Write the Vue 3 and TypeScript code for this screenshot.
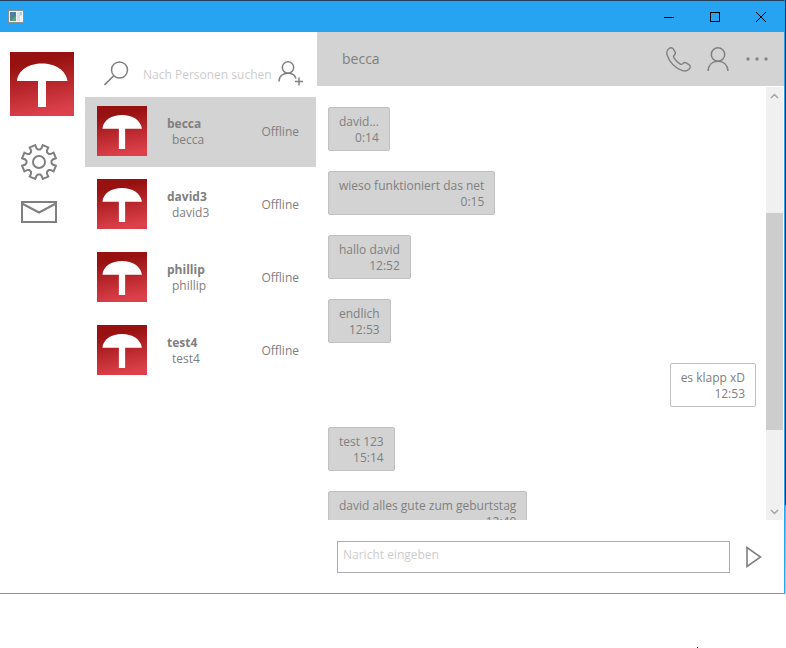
<script setup lang="ts">
import { ref } from 'vue'

interface Contact {
  name: string
  handle: string
  status: string
}

interface Message {
  text: string
  time: string
  own?: boolean
}

const contacts: Contact[] = [
  { name: 'becca', handle: 'becca', status: 'Offline' },
  { name: 'david3', handle: 'david3', status: 'Offline' },
  { name: 'phillip', handle: 'phillip', status: 'Offline' },
  { name: 'test4', handle: 'test4', status: 'Offline' },
]

const messages: Message[] = [
  { text: 'david...', time: '0:14' },
  { text: 'wieso funktioniert das net', time: '0:15' },
  { text: 'hallo david', time: '12:52' },
  { text: 'endlich', time: '12:53' },
  { text: 'es klapp xD', time: '12:53', own: true },
  { text: 'test 123', time: '15:14' },
  { text: 'david alles gute zum geburtstag', time: '12:40' },
]

const selected = ref(0)
const search = ref('')
const draft = ref('')

// Outline of an eight-toothed cog centred on (18, 18).
function cogPath(): string {
  const point = (radius: number, degrees: number): string => {
    const a = (degrees * Math.PI) / 180
    return `${(18 + radius * Math.cos(a)).toFixed(2)} ${(18 + radius * Math.sin(a)).toFixed(2)}`
  }
  const points: string[] = []
  for (let i = 0; i < 8; i++) {
    const c = 22.5 + i * 45
    points.push(point(12.6, c - 17), point(14, c - 12), point(17.3, c - 10))
    points.push(point(17.3, c + 10), point(14, c + 12), point(12.6, c + 17))
  }
  return `M${points.join('L')}Z`
}

const cog = cogPath()
</script>

<template>
  <div class="desktop">
    <div class="window">
      <header class="titlebar">
        <svg class="app-icon" width="16" height="13" viewBox="0 0 16 13" aria-hidden="true">
          <rect x="0.5" y="0.5" width="15" height="12" fill="#eef3f5" stroke="#8d8f92" />
          <rect x="2" y="2" width="6" height="9" fill="#4b8a86" />
          <path d="M2 2h6v3L2 8z" fill="#4c7fa5" />
          <path d="M2 11l6-5v5z" fill="#5aa56b" />
          <rect x="9" y="2" width="3" height="9" fill="#dcdedf" />
          <path d="M12 2h2v3l-2 1z" fill="#a5d3d6" />
        </svg>
        <div class="window-buttons">
          <button type="button" aria-label="Minimieren">
            <svg width="10" height="10" viewBox="0 0 10 10"><path d="M0 5.5H10" /></svg>
          </button>
          <button type="button" aria-label="Maximieren">
            <svg width="10" height="10" viewBox="0 0 10 10"><rect x="0.5" y="0.5" width="9" height="9" /></svg>
          </button>
          <button type="button" aria-label="Schließen">
            <svg width="10" height="10" viewBox="0 0 10 10"><path d="M0 0L10 10M10 0L0 10" /></svg>
          </button>
        </div>
      </header>

      <div class="body">
        <nav class="rail">
          <svg class="avatar large" viewBox="0 0 64 64" aria-hidden="true">
            <defs>
              <linearGradient id="brand" x1="0.4" y1="0" x2="0.6" y2="1">
                <stop offset="0.15" stop-color="#981111" />
                <stop offset="0.95" stop-color="#dc404a" />
              </linearGradient>
            </defs>
            <rect width="64" height="64" fill="url(#brand)" />
            <path d="M7 29C8 18 19 11.500 32 11.500S56 18 57.500 29H36V55H28V29Z" fill="#fff" />
          </svg>
          <button type="button" aria-label="Einstellungen">
            <svg class="icon" width="36" height="36" viewBox="0 0 36 36">
              <path :d="cog" stroke-width="2" />
              <circle cx="18" cy="18" r="6" stroke-width="2" />
            </svg>
          </button>
          <button type="button" aria-label="Nachrichten">
            <svg class="icon" width="36" height="24" viewBox="0 0 36 24">
              <path d="M1 2H35V22H1ZM1 3.500L18 12.500L35 3.500" stroke-width="2" />
            </svg>
          </button>
        </nav>

        <aside class="contacts">
          <div class="search">
            <label for="person-search" aria-label="Suche">
              <svg class="icon" width="25" height="25" viewBox="0 0 25 25">
                <circle cx="15.500" cy="9" r="8" stroke-width="1.500" />
                <path d="M10 14.500L0.500 24" stroke-width="1.700" />
              </svg>
            </label>
            <input id="person-search" v-model="search" type="text" placeholder="Nach Personen suchen" />
            <button type="button" aria-label="Person hinzufügen">
              <svg class="icon" width="26" height="25" viewBox="0 0 26 25">
                <circle cx="10" cy="6.500" r="5.700" stroke-width="1.500" />
                <path d="M1 20.500C1 15 5 12.200 10 12.200C14 12.200 17 14 18 17.500M17 20.500H25M21 16.500V24.500" stroke-width="1.500" />
              </svg>
            </button>
          </div>
          <ul>
            <li v-for="(contact, index) in contacts" :key="contact.name">
              <button
                type="button"
                class="contact"
                :class="{ active: index === selected }"
                @click="selected = index"
              >
                <svg class="avatar" viewBox="0 0 64 64" aria-hidden="true">
                  <rect width="64" height="64" fill="url(#brand)" />
                  <path d="M7 29C8 18 19 11.500 32 11.500S56 18 57.500 29H36V55H28V29Z" fill="#fff" />
                </svg>
                <span class="who">
                  <strong>{{ contact.name }}</strong>
                  <span class="handle">{{ contact.handle }}</span>
                </span>
                <span class="status">{{ contact.status }}</span>
              </button>
            </li>
          </ul>
        </aside>

        <main class="chat">
          <header class="chat-head">
            <h1>{{ contacts[selected].name }}</h1>
            <button type="button" aria-label="Anrufen">
              <svg class="icon" width="25" height="25" viewBox="0 0 25 25">
                <path
                  d="M3 1.500C4.500 0.300 6.300 0.600 7.200 1.900L9 4.800C9.700 6 9.400 7.200 8.300 8.100C7.300 8.900 7.300 9.800 8 10.900C9.700 13.500 11.500 15.300 13.900 16.900C15 17.600 15.900 17.500 16.700 16.600C17.600 15.500 18.900 15.200 20.100 15.900L23 17.700C24.400 18.600 24.600 20.300 23.500 21.700C21.900 23.900 19.400 24.500 16.500 23.600C9.500 21.300 3.500 15.200 1.200 8.300C0.300 5.400 1 3 3 1.500Z"
                  stroke-width="1.400"
                />
              </svg>
            </button>
            <button type="button" aria-label="Profil">
              <svg class="icon" width="22" height="25" viewBox="0 0 22 25">
                <circle cx="11" cy="7.500" r="6.700" stroke-width="1.500" />
                <path d="M1 24C1.500 18 5.500 14.300 11 14.300S20.500 18 21 24" stroke-width="1.500" />
              </svg>
            </button>
            <button type="button" aria-label="Mehr">
              <svg width="24" height="6" viewBox="0 0 24 6" fill="#858585">
                <circle cx="3" cy="3" r="1.700" />
                <circle cx="12" cy="3" r="1.700" />
                <circle cx="21" cy="3" r="1.700" />
              </svg>
            </button>
          </header>

          <div class="history">
            <ol>
              <li v-for="(message, index) in messages" :key="index" :class="{ own: message.own }">
                <span>{{ message.text }}</span>
                <time>{{ message.time }}</time>
              </li>
            </ol>
            <div class="scrollbar" aria-hidden="true">
              <svg width="17" height="17" viewBox="0 0 17 17"><path d="M5 11L8.500 7.500L12 11" /></svg>
              <div class="track-before"></div>
              <div class="thumb"></div>
              <div class="track-after"></div>
              <svg width="17" height="17" viewBox="0 0 17 17"><path d="M5 7L8.500 10.500L12 7" /></svg>
            </div>
          </div>

          <form class="compose" @submit.prevent>
            <textarea v-model="draft" rows="1" aria-label="Nachricht" placeholder="Naricht eingeben"></textarea>
            <button type="submit" aria-label="Senden">
              <svg class="icon" width="16" height="22" viewBox="0 0 16 22">
                <path d="M1 1.500V20.500L14.500 11Z" stroke-width="1.600" />
              </svg>
            </button>
          </form>
        </main>
      </div>
    </div>
    <div class="edge"></div>
    <div class="speck"></div>
  </div>
</template>

<style>
body {
  margin: 0;
  background: #fff;
}
</style>

<style scoped>
.desktop {
  position: relative;
  display: flex;
  flex-direction: column;
  height: 100vh;
  overflow: hidden;
  font: 12px/16px "Open Sans", "Noto Sans", sans-serif;
  color: #808080;
}

.window {
  display: flex;
  flex-direction: column;
  height: calc(100vh - 54px);
  box-sizing: border-box;
  margin-right: 1px;
  border-top: 1px solid #24405a;
  border-right: 1px solid #26a4f2;
  border-bottom: 1px solid #45a5dc;
}

.edge {
  position: absolute;
  top: 0;
  right: 0;
  width: 1px;
  height: calc(100vh - 54px);
  background: linear-gradient(#1b3047 85%, #9aa5ad 85%, #c5cdd2);
}

.speck {
  position: absolute;
  right: 88px;
  bottom: 0;
  width: 1px;
  height: 1px;
  background: #1010a0;
}

button {
  display: flex;
  align-items: center;
  justify-content: center;
  padding: 0;
  border: 0;
  background: none;
  color: inherit;
  font: inherit;
}

svg {
  display: block;
  flex: none;
}

.icon {
  fill: none;
  stroke: #808080;
}

ul,
ol {
  margin: 0;
  padding: 0;
  list-style: none;
}

input,
textarea {
  box-sizing: border-box;
  min-width: 0;
  font: inherit;
  color: inherit;
  outline: 0;
}

::placeholder {
  color: #cdcdcd;
  opacity: 1;
}

.titlebar {
  display: flex;
  flex: none;
  align-items: center;
  justify-content: space-between;
  height: 31px;
  padding-left: 8px;
  background: #26a4f2;
}

.window-buttons {
  display: flex;
}

.window-buttons button {
  width: 46px;
  height: 31px;
}

.window-buttons svg {
  fill: none;
  stroke: #000;
}

.body {
  display: flex;
  flex: 1;
  min-height: 0;
}

.rail {
  display: flex;
  flex: none;
  flex-direction: column;
  align-items: flex-start;
  width: 75px;
  padding: 20px 0 0 10px;
}

.rail button {
  margin: 28px 0 0 11px;
}

.rail button + button {
  margin-top: 20px;
}

.avatar {
  width: 50px;
  height: 50px;
}

.avatar.large {
  width: 64px;
  height: 64px;
}

.contacts {
  flex: none;
  width: 232px;
}

.search {
  display: flex;
  align-items: center;
  height: 65px;
  box-sizing: border-box;
  padding: 19px 13px 0 19px;
}

.search label,
.search button {
  display: flex;
  flex: none;
  align-items: flex-start;
  height: 46px;
  padding-top: 10px;
  box-sizing: border-box;
}

.search input {
  flex: 1;
  height: 24px;
  margin: 0 2px 0 14px;
  padding: 0;
  border: 0;
  background: none;
}

.contacts ul {
  display: flex;
  flex-direction: column;
  gap: 3px;
}

.contact {
  justify-content: flex-start;
  width: 231px;
  height: 70px;
  padding: 0 17px 0 12px;
  text-align: left;
}

.contact .avatar {
  margin-bottom: 2px;
}

.contact.active {
  background: #d3d3d3;
}

.who {
  display: flex;
  flex: 1;
  flex-direction: column;
  margin-left: 20px;
}

.handle {
  padding-left: 5px;
}

.chat {
  display: flex;
  flex: 1;
  flex-direction: column;
  min-width: 0;
}

.chat-head {
  display: flex;
  flex: none;
  align-items: center;
  gap: 16px;
  height: 54px;
  padding: 0 15px 0 25px;
  background: #d3d3d3;
}

.chat-head h1 {
  flex: 1;
  margin: 0;
  font-size: 14px;
  line-height: 20px;
  font-weight: 400;
}

.history {
  display: flex;
  flex: 1;
  min-height: 0;
}

.history ol {
  display: flex;
  flex: 1;
  flex-direction: column;
  align-items: flex-start;
  gap: 20px;
  overflow: hidden;
  padding: 21px 10px 0 11px;
}

.history li {
  display: flex;
  flex: none;
  flex-direction: column;
  box-sizing: border-box;
  padding: 6px 10px 4px;
  border: 1px solid #c0c0c0;
  border-radius: 2px;
  background: #d3d3d3;
}

.history li.own {
  align-self: flex-end;
  background: #fff;
}

time {
  text-align: right;
}

.scrollbar {
  display: flex;
  flex: none;
  flex-direction: column;
  width: 17px;
  margin: 1px 1px 0 0;
  background: #f0f0f0;
}

.scrollbar path {
  fill: none;
  stroke: #a3a3a3;
  stroke-width: 1.5;
}

.track-before {
  flex: 109;
}

.thumb {
  flex: 217;
  background: #cdcdcd;
}

.track-after {
  flex: 73;
}

.compose {
  display: flex;
  flex: none;
  align-items: center;
  gap: 16px;
  padding: 21px 22px 20px 20px;
}

.compose textarea {
  flex: 1;
  height: 32px;
  padding: 5px;
  border: 1px solid #abadb3;
  border-radius: 0;
  background: #fff;
  resize: none;
  overflow: hidden;
}
</style>
